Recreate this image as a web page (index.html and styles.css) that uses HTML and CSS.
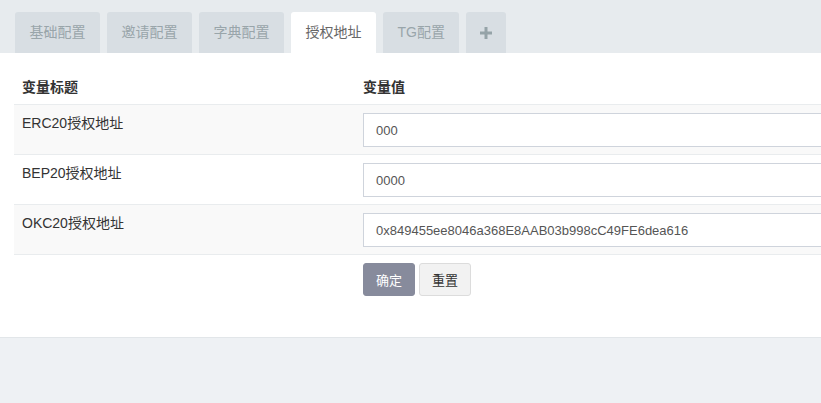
FILE: index.html
```html
<!DOCTYPE html>
<html lang="zh-CN">
<head>
  <meta charset="UTF-8" />
  <meta name="viewport" content="width=device-width, initial-scale=1.0"/>
  <title>授权地址</title>
  <link rel="stylesheet" href="styles.css">
</head>
<body>
  <div class="page">
    <ul class="tabs">
      <li class="tab">基础配置</li>
      <li class="tab">邀请配置</li>
      <li class="tab">字典配置</li>
      <li class="tab active">授权地址</li>
      <li class="tab">TG配置</li>
      <li class="tab tab-add">
        <svg width="12" height="12" viewBox="0 0 12 12"><path d="M4.5 0h3v4.5H12v3H7.5V12h-3V7.5H0v-3h4.5z" fill="#95a3a8"/></svg>
      </li>
    </ul>

    <div class="panel">
      <form>
        <table class="config-table">
          <thead>
            <tr>
              <th class="col-title">变量标题</th>
              <th>变量值</th>
            </tr>
          </thead>
          <tbody>
            <tr>
              <td>ERC20授权地址</td>
              <td><input class="form-control" type="text" value="000" /></td>
            </tr>
            <tr>
              <td>BEP20授权地址</td>
              <td><input class="form-control" type="text" value="0000" /></td>
            </tr>
            <tr>
              <td>OKC20授权地址</td>
              <td><input class="form-control" type="text" value="0x849455ee8046a368E8AAB03b998cC49FE6dea616" /></td>
            </tr>
          </tbody>
        </table>
        <div class="actions">
          <button type="submit" class="btn btn-primary">确定</button>
          <button type="reset" class="btn btn-default">重置</button>
        </div>
      </form>
    </div>
  </div>
</body>
</html>
```

FILE: styles.css
```css
html, body {
  margin: 0;
  padding: 0;
  background-color: #eef1f4;
  overflow: hidden;
}

body {
  font-family: "Liberation Sans", Arial, "Noto Sans CJK SC", sans-serif;
  font-size: 14px;
  color: #333;
}

.page {
  min-width: 1100px;
}

.tabs {
  display: flex;
  gap: 7px;
  list-style: none;
  margin: 0;
  padding: 12px 15px 0;
  background-color: #e7ebee;
}

.tab {
  height: 41px;
  line-height: 41px;
  padding: 0 14.5px;
  background-color: #d8dee3;
  color: #99a5aa;
  border-radius: 3px 3px 0 0;
  font-size: 14px;
}

.tab.active {
  background-color: #ffffff;
  color: #666;
}

.tab-add {
  width: 40px;
  padding: 0;
  display: flex;
  align-items: center;
  justify-content: center;
}

.panel {
  background-color: #ffffff;
  padding: 16px 14px 41px;
  border-bottom: 1px solid #e2e6e9;
}

.config-table {
  width: 100%;
  border-collapse: collapse;
}

.config-table th,
.config-table td {
  padding: 8px 8px 7px;
  line-height: 20px;
  text-align: left;
  vertical-align: top;
}

.config-table th {
  font-weight: bold;
  color: #333;
}

.config-table .col-title {
  width: 325px;
}

.config-table td {
  border-top: 1px solid #e9ecee;
}

.config-table tbody tr:nth-child(odd) {
  background-color: #f9f9f9;
}

.config-table tbody tr:last-child td {
  border-bottom: 1px solid #e9ecee;
}

.form-control {
  display: block;
  box-sizing: border-box;
  width: 100%;
  height: 34px;
  padding: 6px 12px;
  border: 1px solid #cfd4dc;
  border-radius: 0;
  background: #fff;
  font-family: "Liberation Sans", Arial, sans-serif;
  font-size: 13px;
  color: #555;
}

.actions {
  padding: 8px 0 0 349px;
  display: flex;
  gap: 4px;
}

.btn {
  height: 33px;
  padding: 0 12px;
  border-radius: 3px;
  font-family: "Liberation Sans", Arial, "Noto Sans CJK SC", sans-serif;
  font-size: 13px;
  cursor: pointer;
}

.btn-primary {
  background-color: #878b9c;
  border: 1px solid #878b9c;
  color: #fff;
}

.btn-default {
  background-color: #f2f2f2;
  border: 1px solid #dcdcdc;
  color: #333;
}
```
